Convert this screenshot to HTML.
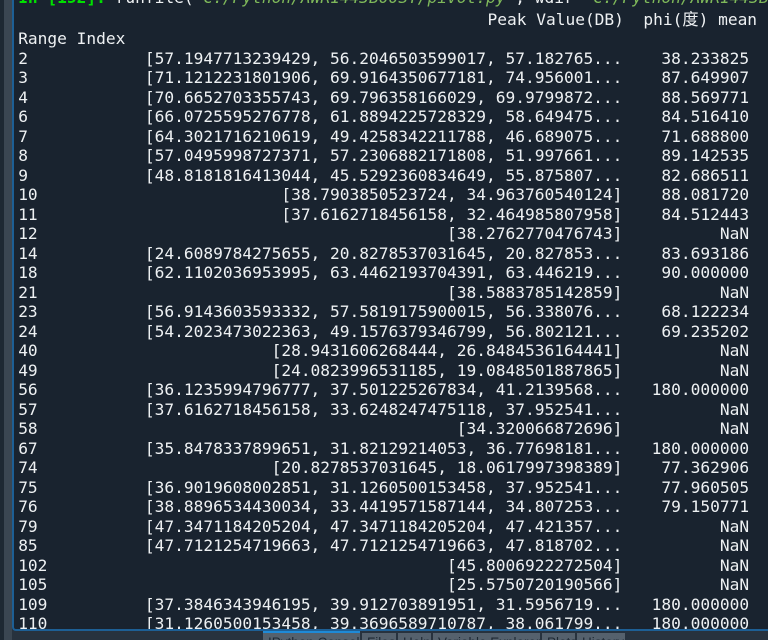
<!DOCTYPE html>
<html><head><meta charset="utf-8"><style>
html,body{margin:0;padding:0;width:768px;height:640px;overflow:hidden;background:#27323e}
#left{position:absolute;left:0;top:0;width:4px;height:640px;background:#1d2833}
#left2{position:absolute;left:4px;top:0;width:8px;height:640px;background:#3a4652}
#pane{position:absolute;left:12px;top:-10px;width:770px;height:638.5px;background:#19232f;border-left:2px solid #1d5f95;border-bottom:2px solid #1d5f95;border-bottom-left-radius:4px;overflow:hidden}
pre{position:absolute;left:4.2px;top:0;margin:0;font:16.2px/19.5px "DejaVu Sans Mono","Noto Sans CJK SC",monospace;color:#eef1f3;white-space:pre}
.p{color:#00e000;font-weight:bold}.s{color:#7fb95a;font-style:italic}
.t{position:relative;top:-2px}.h{position:relative;left:1.5px}
.tab{position:absolute;top:633px;height:7px;background:#55616d;color:#1d2833;font:13.5px/16px "Liberation Sans",sans-serif;padding:2px 0 0 5px;box-sizing:border-box;overflow:hidden;white-space:nowrap}
#bar{position:absolute;left:263px;top:631px;width:97px;height:2px;background:#1f8ad6}
</style></head><body>
<div id="left"></div><div id="left2"></div>
<div id="pane"><pre><span class="t"><span class="p">In [152]:</span> runfile(<span class="s">'C:/Python/AWR1443B00ST/pivot.py'</span>, wdir=<span class="s">'C:/Python/AWR1443B00ST'</span>)</span>
<span class="h">                                                Peak Value(DB)  phi(度) mean</span>
Range Index
2            [57.1947713239429, 56.2046503599017, 57.182765...    38.233825
3            [71.1212231801906, 69.9164350677181, 74.956001...    87.649907
4            [70.6652703355743, 69.796358166029, 69.9799872...    88.569771
6            [66.0725595276778, 61.8894225728329, 58.649475...    84.516410
7            [64.3021716210619, 49.4258342211788, 46.689075...    71.688800
8            [57.0495998727371, 57.2306882171808, 51.997661...    89.142535
9            [48.8181816413044, 45.5292360834649, 55.875807...    82.686511
10                         [38.7903850523724, 34.963760540124]    88.081720
11                         [37.6162718456158, 32.464985807958]    84.512443
12                                          [38.2762770476743]          NaN
14           [24.6089784275655, 20.8278537031645, 20.827853...    83.693186
18           [62.1102036953995, 63.4462193704391, 63.446219...    90.000000
21                                          [38.5883785142859]          NaN
23           [56.9143603593332, 57.5819175900015, 56.338076...    68.122234
24           [54.2023473022363, 49.1576379346799, 56.802121...    69.235202
40                        [28.9431606268444, 26.8484536164441]          NaN
49                        [24.0823996531185, 19.0848501887865]          NaN
56           [36.1235994796777, 37.501225267834, 41.2139568...   180.000000
57           [37.6162718456158, 33.6248247475118, 37.952541...          NaN
58                                           [34.320066872696]          NaN
67           [35.8478337899651, 31.82129214053, 36.77698181...   180.000000
74                        [20.8278537031645, 18.0617997398389]    77.362906
75           [36.9019608002851, 31.1260500153458, 37.952541...    77.960505
76           [38.8896534430034, 33.4419571587144, 34.807253...    79.150771
79           [47.3471184205204, 47.3471184205204, 47.421357...          NaN
85           [47.7121254719663, 47.7121254719663, 47.818702...          NaN
102                                         [45.8006922272504]          NaN
105                                         [25.5750720190566]          NaN
109          [37.3846343946195, 39.912703891951, 31.5956719...   180.000000
110          [31.1260500153458, 39.3696589710787, 38.061799...   180.000000
</pre></div>
<div id="bar"></div>
<div class="tab" style="left:263px;width:97px">IPython Console</div>
<div class="tab" style="left:362px;width:34px">Files</div>
<div class="tab" style="left:398px;width:33px">Help</div>
<div class="tab" style="left:433px;width:107px">Variable Explorer</div>
<div class="tab" style="left:542px;width:33px">Plots</div>
<div class="tab" style="left:577px;width:48px">History</div>
</body></html>
